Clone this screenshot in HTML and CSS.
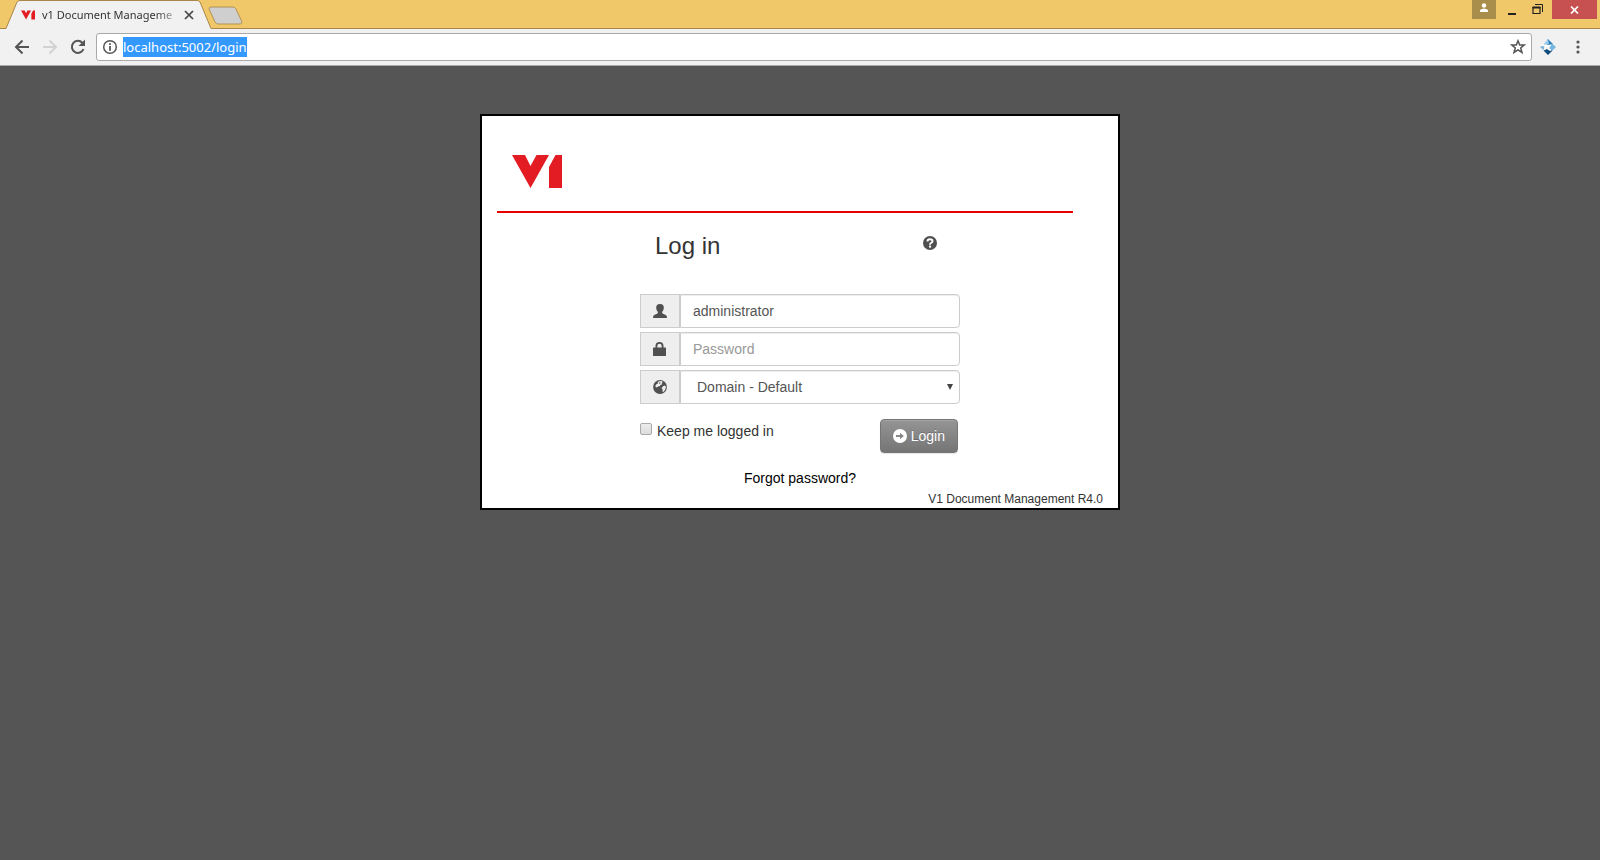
FILE: index.html
```html
<!DOCTYPE html>
<html lang="en">
<head>
<meta charset="utf-8">
<title>v1 Document Management</title>
<link rel="stylesheet" href="styles.css">
</head>
<body>
<header class="browser">
  <div class="titlebar">
    <div class="tab">
      <svg class="tab-shape" viewBox="0 0 208 29" aria-hidden="true"><path d="M0 29V28.500H1L12 2Q13 .5 15 .5H192Q194 .5 195 2L206 28.500H208V29Z" fill="#f1f1f1"/><path d="M0 28.500H1L12 2Q13 .5 15 .5H192Q194 .5 195 2L206 28.500H208" fill="none" stroke="#a88749"/></svg>
      <svg class="favicon" viewBox="0 0 50 33" aria-hidden="true"><path d="M0 0H13L18 10L23 0H36L18 33ZM37 12L43 0H50V33H37Z" fill="#e31b23"/></svg>
      <span class="tab-title">v1 Document Manageme</span>
      <button class="tab-close" aria-label="Close tab"><svg width="10" height="10" viewBox="0 0 10 10"><path d="M1 1L9 9M9 1L1 9" stroke="#444" stroke-width="1.700"/></svg></button>
    </div>
    <button class="new-tab" aria-label="New tab"><svg width="36" height="19" viewBox="0 0 36 19"><path d="M3 1H25Q27 1 28 3L34 16Q34 18 32 18H10Q8 18 7 16L1 3Q1 1 3 1Z" fill="#cfcfcf" stroke="#b29255"/></svg></button>
    <div class="window-controls">
      <button class="profile" aria-label="Profile"><svg width="10" height="10" viewBox="0 0 10 10"><circle cx="5" cy="2.500" r="2.200" fill="#fff"/><path d="M1 9V7Q3 5.500 5 5.500T9 7V9Z" fill="#fff"/></svg></button>
      <button class="minimize" aria-label="Minimize"><svg width="10" height="10" viewBox="0 0 10 10"><path d="M1 6H9V8H1Z" fill="#222"/></svg></button>
      <button class="restore" aria-label="Restore"><svg width="11" height="11" viewBox="0 0 11 11"><path d="M3 .5H10.500V8" fill="none" stroke="#222"/><path d="M1 3.500H8V9.500H1Z" fill="none" stroke="#222" stroke-width="1.200"/><path d="M.5 2.500H8.500V4.500H.5Z" fill="#222"/></svg></button>
      <button class="close" aria-label="Close"><svg width="9" height="8" viewBox="0 0 9 8"><path d="M1 .5L8 7.500M8 .5L1 7.500" stroke="#fff" stroke-width="1.700"/></svg></button>
    </div>
  </div>
  <div class="toolbar">
    <button class="nav" aria-label="Back"><svg width="16" height="16" viewBox="0 0 16 16"><path d="M15 8H2M8.500 1.500L2 8L8.500 14.500" fill="none" stroke="#555" stroke-width="2"/></svg></button>
    <button class="nav" aria-label="Forward"><svg width="16" height="16" viewBox="0 0 16 16"><path d="M1 8H14M7.500 1.500L14 8L7.500 14.500" fill="none" stroke="#d2d2d2" stroke-width="2"/></svg></button>
    <button class="nav" aria-label="Reload"><svg width="16" height="16" viewBox="0 0 16 16"><path d="M13.500 10A6 6 0 1 1 12.300 3.800" fill="none" stroke="#555" stroke-width="2"/><path d="M15 .5V7H8.500Z" fill="#555"/></svg></button>
    <div class="omnibox">
      <svg width="16" height="16" viewBox="0 0 16 16" aria-hidden="true"><circle cx="8" cy="8" r="6.300" fill="none" stroke="#555" stroke-width="1.500"/><path d="M7.100 7H8.900V11.700H7.100ZM7.100 4.200H8.900V5.900H7.100Z" fill="#555"/></svg>
      <input class="url" type="text" aria-label="Address" value="localhost:5002/login" spellcheck="false" autofocus>
      <button class="star" aria-label="Bookmark"><svg width="16" height="16" viewBox="0 0 16 16"><path d="M8 1.800L9.700 6H14.200L10.700 9L12 13.500L8 10.900L4 13.500L5.300 9L1.800 6H6.300Z" fill="none" stroke="#555" stroke-width="1.500"/></svg></button>
    </div>
    <button class="ext" aria-label="Extension"><svg width="16" height="16" viewBox="0 0 16 16"><path d="M8 0L13 5L12 6H3.500L5 4Q7 3 8 0Z" fill="#2e7fb8"/><path d="M8 0L4.500 4.500L5 6L9 5Z" fill="#9ccbea"/><path d="M12 4.500L16 8L12.500 11.500L9.500 10V6.500Z" fill="#74b4de"/><path d="M0 8L2.500 6.500L4.500 7.500L3.500 11Z" fill="#7fb4da"/><path d="M3.500 11.500L6 10L9 11L12.500 11.500L8 16Z" fill="#0d4c7d"/><path d="M1.500 6.700Q3.500 5.600 6 6.300T11 6.300M5.500 6.500Q5.800 9 4.500 11M8.700 6.500V9.500Q9 11.300 11 10.800" fill="none" stroke="#fff" stroke-width="1.500"/></svg></button>
    <button class="menu" aria-label="Menu"><svg width="4" height="14" viewBox="0 0 4 14"><circle cx="2" cy="2" r="1.600" fill="#555"/><circle cx="2" cy="7" r="1.600" fill="#555"/><circle cx="2" cy="12" r="1.600" fill="#555"/></svg></button>
  </div>
</header>

<main class="page">
  <section class="dialog">
    <div class="brand">
      <svg class="logo" width="50" height="33" viewBox="0 0 50 33" role="img" aria-label="V1"><path d="M0 0H13L18.500 11L24.500 0H37L18.500 33ZM37 12L43.500 0H50V33H37Z" fill="#e31b23"/></svg>
    </div>
    <form class="login-form">
      <div class="heading">
        <h1>Log in</h1>
        <button type="button" class="help" aria-label="Help"><svg width="14" height="14" viewBox="0 0 14 14"><circle cx="7" cy="7" r="7" fill="#505050"/><path d="M4.500 5.500Q4.500 3.300 7 3.300T9.500 5.200Q9.500 6.300 8 7Q7 7.500 7 8.700" fill="none" stroke="#fff" stroke-width="1.900"/><path d="M6 9.600H8.100V11.600H6Z" fill="#fff"/></svg></button>
      </div>
      <div class="fields">
        <div class="group">
          <label class="addon" for="user" aria-label="User name"><svg width="14" height="14" viewBox="0 0 14 14"><path d="M7 0C9.800 0 10.900 1.600 10.800 3.600C10.800 5.600 10.200 6.800 9.200 7.800V9C9.500 10 13 10.500 13.700 12L14 14H0L.3 12C1 10.500 4.500 10 4.800 9V7.800C3.800 6.800 3.200 5.600 3.200 3.600C3.100 1.600 4.200 0 7 0Z" fill="#505050"/></svg></label>
          <input class="control" id="user" type="text" value="administrator">
        </div>
        <div class="group">
          <label class="addon" for="pass" aria-label="Password"><svg width="14" height="14" viewBox="0 0 14 14"><path d="M0 6Q0 5.400 .6 5.400H2.500V4Q2.500 0 6.500 0T10.500 4V5.400H12.400Q13 5.400 13 6V13.400Q13 14 12.400 14H.6Q0 14 0 13.400ZM4.300 5.400H8.700V4Q8.700 1.700 6.500 1.700T4.300 4Z" fill="#505050"/></svg></label>
          <input class="control" id="pass" type="password" placeholder="Password">
        </div>
        <div class="group">
          <label class="addon" for="domain" aria-label="Domain"><svg width="14" height="14" viewBox="0 0 14 14"><circle cx="7" cy="7" r="6.900" fill="#505050"/><path d="M6 1.300L8 1L9.800 1.800L8.800 3.200L9.200 4.300L7.500 5L6.500 6.300L5 6.500L3.600 7.600L2.300 6.400L3 4.500L4.800 3.800L4.700 2.500Z" fill="#eee"/><path d="M10 6.200L12 5.600L13 7L12 10L10.300 12L9.300 11.200L9.700 9.500L8.500 8.300Z" fill="#eee"/><path d="M6.300 2.500L7.600 2.300L7.200 3.500L6 4Z" fill="#505050"/></svg></label>
          <select class="control" id="domain"><option>Domain - Default</option></select>
        </div>
      </div>
      <div class="actions">
        <label class="keep"><input type="checkbox"><span>Keep me logged in</span></label>
        <button type="button" class="submit"><svg width="14" height="14" viewBox="0 0 14 14" aria-hidden="true"><circle cx="7" cy="7" r="7" fill="#fff"/><path d="M3 6.100H7V3.800L10.900 7L7 10.200V7.900H3Z" fill="#868686"/></svg><span>Login</span></button>
      </div>
    </form>
    <a class="forgot" href="#">Forgot password?</a>
    <p class="version">V1 Document Management R4.0</p>
  </section>
</main>
<script src="app.js"></script>
</body>
</html>
```
FILE: styles.css
```css
* { box-sizing: border-box; }
body {
  margin: 0;
  min-height: 100vh;
  background: #555;
  color: #333;
  font: 14px/20px "Liberation Sans", Arial, sans-serif;
}
button { margin: 0; padding: 0; border: 0; background: none; font: inherit; }
svg { display: block; flex: none; }

.browser { font-family: "Noto Sans", "Open Sans", sans-serif; }
.titlebar {
  display: flex;
  height: 29px;
  padding-left: 5px;
  background: #f0c869;
  box-shadow: inset 0 -1px #a88749;
}
.tab {
  position: relative;
  display: flex;
  align-items: center;
  width: 208px;
  padding: 0 19px 0 16px;
}
.tab-shape { position: absolute; left: 0; top: 0; width: 208px; height: 29px; }
.favicon { position: relative; width: 14px; height: 10px; }
.tab-title {
  position: relative;
  flex: 1;
  margin-left: 7px;
  white-space: nowrap;
  font-size: 11px;
  color: #333;
  -webkit-mask-image: linear-gradient(to right, #000 80%, transparent);
  mask-image: linear-gradient(to right, #000 80%, transparent);
}
.tab-close { position: relative; }
.new-tab { align-self: center; margin-left: -5px; padding-top: 2px; }
.window-controls {
  display: flex;
  align-items: flex-start;
  margin-left: auto;
  padding-right: 3px;
}
.window-controls button { display: grid; place-items: center; height: 19px; }
.profile { width: 24px; background: #a98d4b; }
.window-controls .profile { padding-bottom: 3px; }
.minimize { width: 32px; padding-top: 5px; }
.restore { width: 24px; padding-right: 5px; }
.close { width: 45px; background: #c75050; }

.toolbar {
  display: flex;
  align-items: center;
  height: 37px;
  padding: 0 20px 0 14px;
  background: #f1f1f1;
  border-bottom: 1px solid #aaa;
}
.nav { margin-right: 12px; }
.nav + .nav + .nav { margin-right: 10px; }
.omnibox {
  display: flex;
  flex: 1;
  align-items: center;
  height: 28px;
  padding: 0 5px;
  background: #fff;
  border: 1px solid #a9a9a9;
  border-radius: 3px;
}
.url {
  flex: 1;
  height: 20px;
  margin-left: 5px;
  padding: 0;
  border: 0;
  outline: 0;
  font: 13px/20px "Noto Sans", "Open Sans", sans-serif;
}
.url::selection { background: #3399ff; color: #fff; }
.ext { margin: 0 20px 0 8px; }

.page { padding: 48px 16px; }
.dialog {
  display: flex;
  flex-direction: column;
  max-width: 640px;
  margin: 0 auto;
  padding: 0 15px;
  background: #fff;
  border: 2px solid #000;
}
.brand {
  height: 97px;
  margin-right: 30px;
  padding: 39px 15px 0;
  border-bottom: 2px solid #e60000;
}
.login-form { width: 100%; max-width: 320px; margin: 0 auto; }
.heading {
  display: flex;
  align-items: flex-start;
  justify-content: space-between;
  padding: 20px 23px 0 15px;
}
h1 { margin: 0; font-size: 24px; line-height: 26px; font-weight: 400; color: #333; }
.help { padding-top: 3px; }
.fields { display: grid; gap: 4px; margin-top: 35px; }
.group { display: flex; }
.addon {
  display: grid;
  place-items: center;
  width: 40px;
  background: #eee;
  border: 1px solid #ccc;
}
.control {
  flex: 1;
  min-width: 0;
  height: 34px;
  padding: 6px 12px;
  color: #555;
  background: #fff;
  border: 1px solid #ccc;
  border-radius: 0 4px 4px 0;
  box-shadow: inset 0 1px 1px rgba(0, 0, 0, .075);
  font: 14px/20px "Liberation Sans", Arial, sans-serif;
}
.control::placeholder { color: #999; opacity: 1; }
select.control {
  appearance: none;
  padding-left: 16px;
  background: #fff url("data:image/svg+xml,%3Csvg xmlns='http://www.w3.org/2000/svg' width='6' height='6'%3E%3Cpath d='M0 0H6L3 6Z' fill='%23444'/%3E%3C/svg%3E") no-repeat right 6px center;
}
.actions {
  display: flex;
  align-items: flex-start;
  justify-content: space-between;
  padding: 15px 2px 0 0;
}
.keep { display: flex; align-items: flex-start; gap: 5px; padding-top: 2px; }
.keep input {
  appearance: none;
  width: 12px;
  height: 12px;
  margin: 2px 0 0;
  border: 1px solid #aaa;
  border-radius: 2px;
  background: linear-gradient(#ededed, #dcdcdc);
}
.submit {
  display: flex;
  align-items: center;
  gap: 4px;
  height: 34px;
  padding: 0 12px;
  color: #fff;
  background: linear-gradient(#959595, #757575);
  border: 1px solid #757575;
  border-radius: 4px;
  box-shadow: inset 0 1px rgba(255, 255, 255, .15), 0 1px 1px rgba(0, 0, 0, .1);
  text-shadow: 0 -1px rgba(0, 0, 0, .2);
}
.forgot { align-self: center; margin-top: 15px; color: #000; text-decoration: none; }
.version { margin: 2px 0 0; text-align: right; font-size: 12px; line-height: 18px; }
```
FILE: app.js
```js
const url = document.querySelector(".url");
url.focus();
url.select();
```
